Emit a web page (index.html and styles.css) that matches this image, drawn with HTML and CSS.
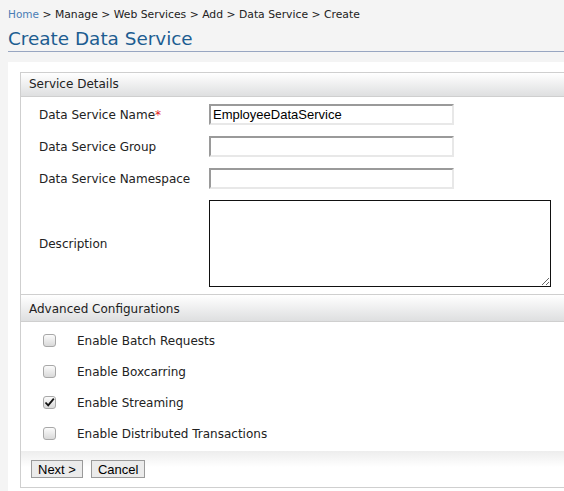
FILE: index.html
```html
<!DOCTYPE html>
<html>
<head>
<meta charset="utf-8">
<link rel="stylesheet" href="styles.css">
</head>
<body>
<div class="page">
  <div class="crumbs"><a class="home" href="#">Home</a> &gt; Manage &gt; Web Services &gt; Add &gt; Data Service &gt; Create</div>
  <h1 class="title">Create Data Service</h1>
  <div class="panel">
    <div class="box">
      <div class="head head-first">Service Details</div>
      <div class="form">
        <label class="lbl">Data Service Name<span class="req">*</span></label>
        <input class="field" type="text" value="EmployeeDataService">
        <label class="lbl">Data Service Group</label>
        <input class="field" type="text">
        <label class="lbl">Data Service Namespace</label>
        <input class="field" type="text">
        <label class="lbl lbl-mid">Description</label>
        <textarea class="area"></textarea>
      </div>
      <div class="head head-second">Advanced Configurations</div>
      <div class="opts">
        <div class="opt"><span class="cb"></span><span class="opt-lbl">Enable Batch Requests</span></div>
        <div class="opt"><span class="cb"></span><span class="opt-lbl">Enable Boxcarring</span></div>
        <div class="opt"><span class="cb"><svg class="tick" viewBox="0 0 13 13" width="13" height="13"><path d="M2.5 6.5 L5.2 9.4 L10.8 2.6" fill="none" stroke="#111" stroke-width="1.8"/></svg></span><span class="opt-lbl">Enable Streaming</span></div>
        <div class="opt"><span class="cb"></span><span class="opt-lbl">Enable Distributed Transactions</span></div>
      </div>
      <div class="foot">
        <button class="btn" type="button">Next &gt;</button>
        <button class="btn" type="button">Cancel</button>
      </div>
    </div>
  </div>
</div>
</body>
</html>
```
FILE: styles.css
```css
html, body {
  margin: 0;
  padding: 0;
  background: #f4f4f4;
  overflow: hidden;
}
.page {
  padding-left: 8px;
  font-family: "DejaVu Sans", Verdana, sans-serif;
  color: #222;
}
.crumbs {
  padding-top: 7px;
  font-size: 10.8px;
  line-height: 15px;
  color: #222;
}
.home {
  color: #4a7db5;
  text-decoration: none;
  font-size: 10.5px;
}
.title {
  margin: 7px 0 0 0;
  font-size: 18.4px;
  font-weight: normal;
  line-height: 20px;
  color: #1d5d91;
  padding-bottom: 2px;
  border-bottom: 1px solid #98a6c1;
}
.panel {
  margin-top: 10px;
  background: #fff;
  padding: 10px 0 10px 12px;
}
.box {
  border: 1px solid #cfcfcf;
  border-right: 0;
}
.head {
  font-size: 12px;
  color: #222;
  padding-left: 8px;
  background: linear-gradient(#ffffff, #dedfe0);
  border-bottom: 1px solid #cfcfcf;
}
.head-first {
  height: 23px;
  line-height: 22px;
}
.head-second {
  border-top: 1px solid #cfcfcf;
  height: 26px;
  line-height: 28px;
}
.form {
  display: grid;
  grid-template-columns: 170px 1fr;
  row-gap: 11px;
  padding: 7px 0 7px 18px;
  align-items: center;
}
.lbl {
  font-size: 12px;
  color: #222;
}
.req {
  color: #e02020;
}
.field {
  box-sizing: border-box;
  width: 245px;
  height: 21px;
  margin: 0;
  padding: 0 2px;
  border-top: 2px solid #9a9a9a;
  border-left: 2px solid #9a9a9a;
  border-right: 2px solid #e8e8e8;
  border-bottom: 2px solid #e8e8e8;
  border-radius: 0;
  font-family: "Liberation Sans", Arial, sans-serif;
  font-size: 13px;
  color: #000;
  background: #fff;
  outline: none;
}
.area {
  box-sizing: border-box;
  width: 342px;
  height: 87px;
  margin: 0;
  border: 1px solid #111;
  border-radius: 0;
  font-family: "Liberation Sans", Arial, sans-serif;
  font-size: 13px;
  background: #fff;
  display: block;
}
.opts {
  padding: 3px 0 2px 0;
}
.opt {
  display: flex;
  align-items: center;
  height: 31px;
}
.cb {
  box-sizing: border-box;
  width: 13px;
  height: 13px;
  margin-left: 22px;
  border: 1px solid #a8a8a8;
  border-radius: 3px;
  background: linear-gradient(#fbfbfb, #d9d9d9);
  position: relative;
}
.tick {
  position: absolute;
  left: -1px;
  top: -1px;
}
.opt-lbl {
  margin-left: 21px;
  font-size: 12px;
  color: #222;
}
.foot {
  background: linear-gradient(#ededed, #ffffff 45%);
  padding: 9px 0 9px 10px;
  display: flex;
  gap: 8px;
}
.btn {
  margin: 0;
  height: 18px;
  padding: 0 6px;
  border: 1px solid #9a9a9a;
  border-radius: 0;
  background: #ebebeb;
  font-family: "Liberation Sans", Arial, sans-serif;
  font-size: 13px;
  line-height: 15px;
  color: #000;
}
```
